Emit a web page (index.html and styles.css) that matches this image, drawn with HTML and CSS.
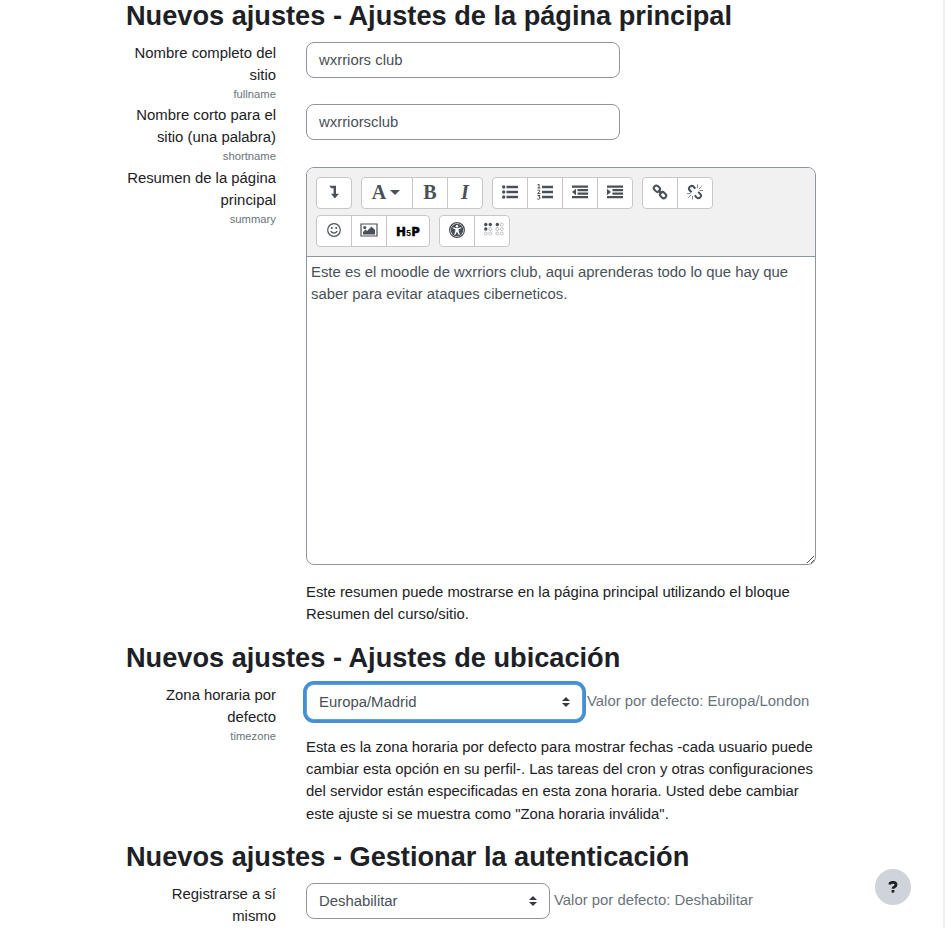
FILE: index.html
```html
<!DOCTYPE html>
<html lang="es">
<head>
<meta charset="utf-8">
<title>Nuevos ajustes</title>
<link rel="stylesheet" href="styles.css">
</head>
<body>
<main class="page">
  <h3>Nuevos ajustes - Ajustes de la página principal</h3>
  <div class="row">
    <div class="label">Nombre completo del sitio<small>fullname</small></div>
    <div class="field"><input class="control" type="text" value="wxrriors club"></div>
  </div>
  <div class="row">
    <div class="label">Nombre corto para el sitio (una palabra)<small>shortname</small></div>
    <div class="field"><input class="control" type="text" value="wxrriorsclub"></div>
  </div>
  <div class="row">
    <div class="label">Resumen de la página principal<small>summary</small></div>
    <div class="field">
      <div class="editor">
        <div class="toolbar">
          <div class="group">
            <button><svg viewBox="0 0 16 16"><path d="M3.300 1.800H10v8h2.900L8.900 14.400 4.900 9.800h2.700V4.200H5.200z"/></svg></button>
          </div>
          <div class="group">
            <button class="wide"><span class="glyph">A</span><i class="caret"></i></button>
            <button><span class="glyph">B</span></button>
            <button><span class="glyph italic">I</span></button>
          </div>
          <div class="group">
            <button><svg viewBox="0 0 16 16"><circle cx="1.700" cy="3" r="1.700"/><circle cx="1.700" cy="8" r="1.700"/><circle cx="1.700" cy="13" r="1.700"/><path d="M4.500 1.800H16v2.400H4.500zM4.500 6.800H16v2.400H4.500zM4.500 11.800H16v2.400H4.500z"/></svg></button>
            <button><svg viewBox="0 0 16 16"><path d="M5 1.800h11v2.400H5zM5 6.800h11v2.400H5zM5 11.800h11v2.400H5z"/><path class="line" d="M.5 1 2 .2V4M.5 4h3M.6 6.200h2q1 1.200-2 3.200H3.500M.5 11.500H3L1.800 13q2 .2 1 1.800-.8.8-2.500.1"/></svg></button>
            <button><svg viewBox="0 0 16 16"><path d="M0 1.500h16v2.300H0zM5.500 5h10.500v2.300H5.500zM5.500 8.500h10.500v2.300H5.500zM0 12h16v2.300H0zM0 8l4-3.200v6.400z"/></svg></button>
            <button><svg viewBox="0 0 16 16"><path d="M0 1.500h16v2.300H0zM5.500 5h10.500v2.300H5.500zM5.500 8.500h10.500v2.300H5.500zM0 12h16v2.300H0zM4 8 0 4.800v6.400z"/></svg></button>
          </div>
          <div class="group">
            <button><svg viewBox="0 0 16 16"><g class="thick"><rect x="1.600" y="2.200" width="6.600" height="5" rx="2.400" transform="rotate(45 4.900 4.700)"/><rect x="7.800" y="8.600" width="6.600" height="5" rx="2.400" transform="rotate(45 11.100 11.100)"/><path d="m6.200 6.200 3.600 3.600"/></g></svg></button>
            <button><svg viewBox="0 0 16 16"><g class="thick"><path d="M8.300 4.600 6.500 2.500Q5 1.200 3.200 2.500 1 4.200 2.400 6l2.200 2.200M7.700 11.300l2 2.200q1.700 1.400 3.400-.1 1.700-1.700.3-3.300l-2.200-2.200"/></g><path class="ray" d="M10.500 4V.5M12 5l2.800-2.800M12.500 6.500H16M5.500 12v3.500M4 11l-2.800 2.800M3.500 9.600H0"/></svg></button>
          </div>
          <div class="group">
            <button><svg viewBox="0 0 16 16"><circle class="stroke" cx="8" cy="8" r="6.300"/><circle cx="5.800" cy="5.900" r="1"/><circle cx="10.200" cy="5.900" r="1"/><path class="stroke" d="M4.700 9.200q3.300 4 6.600 0"/></svg></button>
            <button><svg class="picture" viewBox="0 0 18 16"><path class="stroke" d="M1 2h16v12H1z"/><circle cx="4.700" cy="5.500" r="1.500"/><path d="M3 12.500V10l2.500-2.500L7 9l4.500-4.500L15 8v4.500z"/></svg></button>
            <button class="h5p-button"><span class="h5p"><b>H</b><em>5</em><b>P</b></span></button>
          </div>
          <div class="group">
            <button><svg viewBox="0 0 16 16"><circle class="stroke" cx="8" cy="8" r="7.400"/><circle cx="8" cy="8" r="6.300"/><g class="white"><circle cx="8" cy="4.200" r="1.200"/><path d="m3.800 5.300 3 .8h2.400l3-.8.2 1-2.700.9v1.900l1.100 3.600-1 .4L8.200 10h-.4l-1.600 3.100-1-.4L6.300 9.100V7.200l-2.700-.9z"/></g></svg></button>
            <button><svg class="braille" viewBox="0 0 20 16"><circle cx="1.800" cy="2.500" r="1.700"/><circle cx="6.300" cy="2.500" r="1.700"/><circle cx="1.800" cy="7" r="1.700"/><circle cx="13.300" cy="2.500" r="1.700"/><g class="hollow"><circle cx="6.300" cy="7" r="1.500"/><circle cx="1.800" cy="11.500" r="1.500"/><circle cx="6.300" cy="11.500" r="1.500"/><circle cx="17.800" cy="2.500" r="1.500"/><circle cx="13.300" cy="7" r="1.500"/><circle cx="17.800" cy="7" r="1.500"/><circle cx="13.300" cy="11.500" r="1.500"/><circle cx="17.800" cy="11.500" r="1.500"/></g></svg></button>
          </div>
        </div>
        <div class="content">Este es el moodle de wxrriors club, aqui aprenderas todo lo que hay que saber para evitar ataques ciberneticos.</div>
        <svg class="grip" viewBox="0 0 9 9"><path d="M1 8 8 1M5 8l3-3"/></svg>
      </div>
      <p>Este resumen puede mostrarse en la página principal utilizando el bloque Resumen del curso/sitio.</p>
    </div>
  </div>
  <h3>Nuevos ajustes - Ajustes de ubicación</h3>
  <div class="row">
    <div class="label">Zona horaria por defecto<small>timezone</small></div>
    <div class="field">
      <div class="choice">
        <div class="control select focused">Europa/Madrid<svg viewBox="0 0 8 10"><path d="M0 4 4 0l4 4zM0 6h8l-4 4z"/></svg></div>
        <span class="default">Valor por defecto: Europa/London</span>
      </div>
      <p>Esta es la zona horaria por defecto para mostrar fechas -cada usuario puede cambiar esta opción en su perfil-. Las tareas del cron y otras configuraciones del servidor están especificadas en esta zona horaria. Usted debe cambiar este ajuste si se muestra como "Zona horaria inválida".</p>
    </div>
  </div>
  <h3>Nuevos ajustes - Gestionar la autenticación</h3>
  <div class="row">
    <div class="label">Registrarse a sí mismo</div>
    <div class="field">
      <div class="choice">
        <div class="control select short">Deshabilitar<svg viewBox="0 0 8 10"><path d="M0 4 4 0l4 4zM0 6h8l-4 4z"/></svg></div>
        <span class="default">Valor por defecto: Deshabilitar</span>
      </div>
    </div>
  </div>
</main>
<div class="edge"></div>
<button class="help"><svg viewBox="0 0 10 12"><path class="question" d="M1.600 3.600Q2 1.300 4.800 1.300 8 1.300 8 3.700 8 5 6.300 5.900 5 6.500 5 7.800"/><path d="M3.600 9h2.700v2.600H3.600z"/></svg></button>
</body>
</html>
```

FILE: styles.css
```css
* { box-sizing: border-box; }
html { overflow: hidden; }
body {
  margin: 0;
  height: 928px;
  overflow: hidden;
  background: #fff;
  color: #1d2125;
  font: 14.880px/22.320px "Liberation Sans", Arial, sans-serif;
}
.page { width: 690px; margin-left: 126px; }
h3 {
  margin: 0 0 10px;
  font-size: 27.180px;
  line-height: 32px;
  font-weight: 700;
  white-space: nowrap;
}
.row { display: grid; grid-template-columns: 150px 510px; column-gap: 30px; min-height: 62.450px; }
.label { text-align: right; line-height: 22px; }
small { display: block; font-size: 11.250px; line-height: 17px; color: #6a737b; }
.control {
  display: block;
  width: 314px;
  height: 36px;
  padding: 0 12px;
  border: 1px solid #8f959e;
  border-radius: 8px;
  background: #fff;
  color: #495057;
  font: inherit;
}
input.control { padding-bottom: 1px; }
.editor {
  position: relative;
  height: 398px;
  border: 1px solid #8f959e;
  border-radius: 8px;
  overflow: hidden;
  background: #fff;
}
.toolbar {
  display: flex;
  flex-wrap: wrap;
  align-content: flex-start;
  gap: 6px 9px;
  height: 89px;
  padding: 9px 90px 0 9px;
  border-bottom: 1px solid #8f959e;
  background: #f1f1f1;
}
.group {
  display: flex;
  height: 32px;
  border: 1px solid #c5c8ca;
  border-radius: 4px;
  background: #fff;
  overflow: hidden;
}
.group button {
  display: flex;
  align-items: center;
  justify-content: center;
  width: 35px;
  padding: 0 0 1px;
  border: 0;
  border-right: 1px solid #c5c8ca;
  background: none;
  color: #495057;
}
.group button:last-child { width: 34px; border-right: 0; }
.group .wide { width: 51px; }
.group .h5p-button:last-child { width: 42px; }
.group svg { width: 16px; height: 16px; fill: currentColor; }
.group .picture { width: 18px; }
.group .braille { width: 20px; height: 16px; margin-left: 3px; }
.stroke { fill: none; stroke: currentColor; stroke-width: 1.200; }
.line { fill: none; stroke: currentColor; stroke-width: 1; }
.ray { fill: none; stroke: currentColor; stroke-width: .7; }
.thick { fill: none; stroke: currentColor; stroke-width: 2; }
.white { fill: #fff; }
.hollow { fill: none; stroke: #b0b4b8; stroke-width: .8; }
.glyph { margin-bottom: 1px; font: bold 20px/22px "Liberation Serif", serif; }
.wide .glyph { margin-left: -2px; }
.italic { font-style: italic; }
.caret { margin-left: 4px; border: 5px solid transparent; border-top-color: currentColor; border-bottom: 0; }
.h5p { display: flex; align-items: center; color: #000; font: 900 12px/14px Inter, sans-serif; padding-top: 3px; }
.h5p b { font-weight: 900; -webkit-text-stroke: .4px #000; }
.h5p em { font-size: 8px; font-weight: 700; font-style: normal; margin: 2px .5px 0; }
.content { padding: 4px; line-height: 22.600px; color: #495057; }
.grip { position: absolute; right: 0; bottom: 0; width: 9px; height: 9px; stroke: #555; fill: none; }
p { margin: 16px 0 15.750px; line-height: 22.450px; }
.choice { display: flex; gap: 4px; }
.select { display: flex; align-items: center; justify-content: space-between; width: 277px; }
.select svg { width: 8px; height: 10px; fill: #343a40; }
.short { width: 244px; }
.focused { padding-top: 1px; border-color: #5ea4e4; box-shadow: 0 0 0 3px #488fd0; }
.default { margin-top: 6px; color: #6a737b; white-space: nowrap; }
.edge { position: fixed; top: 0; right: 0; bottom: 0; width: 2px; background: #f0f0f0; }
.help {
  position: fixed;
  right: 34px;
  bottom: 23px;
  display: flex;
  align-items: center;
  justify-content: center;
  width: 36px;
  height: 36px;
  padding: 0;
  border: 0;
  border-radius: 50%;
  background: #ced4da;
}
.help svg { width: 10px; height: 12px; fill: #1d2125; }
.question { fill: none; stroke: #1d2125; stroke-width: 2.800; }
```
